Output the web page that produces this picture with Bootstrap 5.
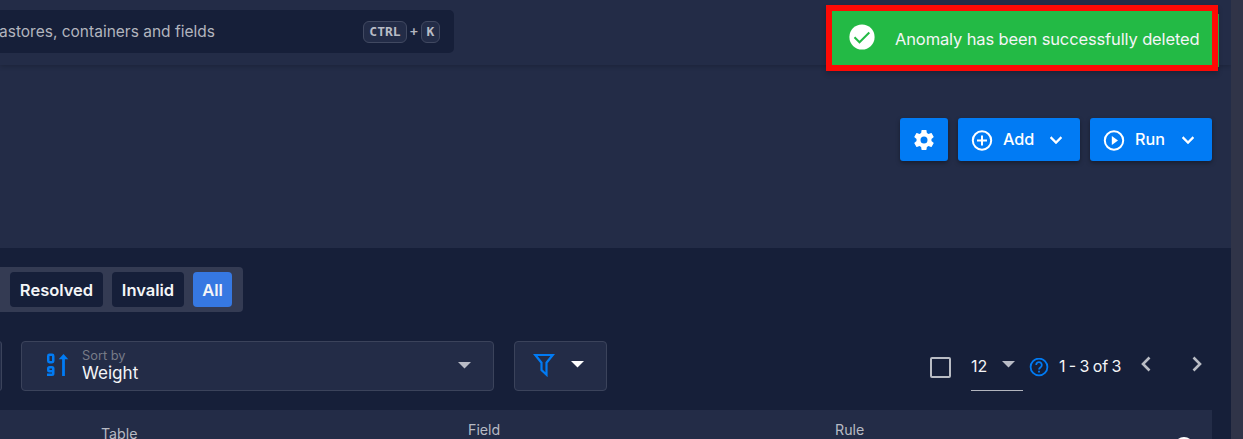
<!DOCTYPE html>
<html lang="en"><head><meta charset="utf-8"><title>Anomalies</title>
<link href="https://cdn.jsdelivr.net/npm/bootstrap@5.3.0/dist/css/bootstrap.min.css" rel="stylesheet">
<style>
html{background:#303448}
body{width:1243px;height:439px;overflow:hidden;background:#303448;font-family:Inter,sans-serif;color:#f4f5f7;font-size:16px;line-height:20px}
.page{width:1231px;height:439px;background:#161f39;overflow:hidden;white-space:nowrap}
.surface{background:#232c47}
.topbar{height:65px;padding-top:10px;box-shadow:0 1px 5px rgba(0,0,0,.22);z-index:1}
.search{width:454px;height:43px;background:#161f39;border-radius:0 5px 5px 0;padding-right:14px;color:#b2b5be;font-size:15.5px}
.hint{margin-left:-1px}
.key{font:bold 13px/19px "DejaVu Sans Mono",monospace;color:#b9bcc6;background:#232c47;border:1px solid #414961;border-radius:6px;width:19px;height:22px;text-align:center;padding:0}
.key.wide{width:44px}
.joiner{width:14px;text-align:center;font:bold 13px/20px "DejaVu Sans Mono",monospace}
.notice{left:826px;top:5px;z-index:2;width:392px;height:66px;border:6px solid #fd0a05;background:#23ba45;box-shadow:0 3px 5px rgba(0,0,0,.2);font-size:16.5px;letter-spacing:-.13px;padding-left:17px}
.notice::after{content:"";position:absolute;left:386px;top:3px;width:1px;height:53px;background:#23a844}
.notice span{margin:1px 0 0 20px}
.notice svg{margin-top:-2px}
.hero{height:183px;padding:53px 19px 0 0;gap:10px}
.act{--bs-btn-color:#fff;--bs-btn-bg:#017bf4;--bs-btn-border-width:0px;--bs-btn-hover-bg:#026fdd;--bs-btn-hover-color:#fff;height:43px;border-radius:3px;padding:0 12px;font-size:16.2px;font-weight:500;width:122px;box-shadow:0 2px 4px rgba(0,0,0,.35)}
.act.square{width:48px}
.act span{margin-left:9px}
.states{width:243px;height:45px;margin-top:19px;background:#343b53;border-radius:0 4px 4px 0;padding-left:10px;gap:9px}
.state{width:93px;height:35px;border-radius:4px;background:#161f39;font-weight:600;font-size:16.5px}
.state.mid{width:72px}
.state.on{width:39px;background:#3678e2}
.tools{height:50px;margin-top:29px;padding-right:19px}
.field{height:50px;border:1px solid #3b435b;border-radius:4px;background:#232c47}
.prev{width:6px;margin-left:-4px}
.sorter{width:473px;margin-left:19px;padding:0 22px 2px 24px}
.sorter small{display:block;font-size:12.8px;line-height:15px;color:#777b87}
.sorter strong{display:block;font-weight:400;font-size:17.1px;line-height:20px}
.filter{width:93px;margin-left:20px;padding:0 22px 3px 18px}
.tick{width:21px;height:21px;border:2px solid #b9bcc4;border-radius:2px;margin:2px 20px 0 323px}
.count{width:52px;height:49px;border-bottom:1px solid #b2b5be;padding:1px 8px 0 0}
.range{margin-left:10px;width:64px;word-spacing:-1.2px}
.thead-row{height:29px;margin-top:19px;width:1212px;color:#b7bac3;font-size:14.2px;padding-left:101px}
.thead-row>span{width:367px;padding-top:10px}
.thead-row>.low{padding-top:14px;height:29px}
svg{display:block;flex:none}
</style></head><body>
<div class="page position-relative d-flex flex-column">
<header class="topbar surface position-relative flex-shrink-0">
<div class="search d-flex align-items-center"><span class="hint">astores, containers and fields</span><kbd class="key wide ms-auto">CTRL</kbd><span class="joiner">+</span><kbd class="key">K</kbd></div>
</header>
<div class="notice position-absolute d-flex align-items-center" role="alert">
<svg width="26" height="26" viewBox="0 0 26 26"><circle cx="13" cy="13" r="12.600" fill="#fff"/><path d="M5.500 13.300l5 5 9.800-9.800" fill="none" stroke="#23ba45" stroke-width="2"/></svg>
<span>Anomaly has been successfully deleted</span></div>
<section class="hero surface d-flex justify-content-end align-items-start flex-shrink-0">
<button class="btn act square d-flex align-items-center"><svg width="24" height="24" viewBox="0 0 24 24" fill="#fff"><path d="M12,15.5A3.5,3.5 0 0,1 8.5,12A3.5,3.5 0 0,1 12,8.5A3.5,3.5 0 0,1 15.5,12A3.5,3.5 0 0,1 12,15.5M19.43,12.97C19.47,12.65 19.5,12.33 19.5,12C19.5,11.67 19.47,11.34 19.43,11L21.54,9.37C21.73,9.22 21.78,8.95 21.66,8.73L19.66,5.27C19.54,5.05 19.27,4.96 19.05,5.05L16.56,6.05C16.04,5.66 15.5,5.32 14.87,5.07L14.5,2.42C14.46,2.18 14.25,2 14,2H10C9.75,2 9.54,2.18 9.5,2.42L9.13,5.07C8.5,5.32 7.96,5.66 7.44,6.05L4.95,5.05C4.73,4.96 4.46,5.05 4.34,5.27L2.34,8.73C2.21,8.95 2.27,9.22 2.46,9.37L4.57,11C4.53,11.34 4.5,11.67 4.5,12C4.5,12.33 4.53,12.65 4.57,12.97L2.46,14.63C2.27,14.78 2.21,15.05 2.34,15.27L4.34,18.73C4.46,18.95 4.73,19.03 4.95,18.95L7.44,17.94C7.96,18.34 8.5,18.68 9.13,18.93L9.5,21.58C9.54,21.82 9.75,22 10,22H14C14.25,22 14.46,21.82 14.5,21.58L14.87,18.93C15.5,18.67 16.04,18.34 16.56,17.94L19.05,18.95C19.27,19.03 19.54,18.95 19.66,18.73L21.66,15.27C21.78,15.05 21.73,14.78 21.54,14.63L19.43,12.97Z"/></svg></button>
<button class="btn act d-flex align-items-center"><svg width="24" height="24" viewBox="0 0 24 24" fill="none" stroke="#fff" stroke-width="2"><circle cx="12" cy="12.500" r="9.200"/><path d="M12 7.500v10M7 12.500h10"/></svg><span>Add</span><svg class="ms-auto" width="24" height="24" viewBox="0 0 24 24" fill="#fff" stroke="#fff" stroke-width=".4"><path d="M7.410 8.580 12 13.170l4.590-4.590L18 10l-6 6-6-6z"/></svg></button>
<button class="btn act d-flex align-items-center"><svg width="24" height="24" viewBox="0 0 24 24" fill="none" stroke="#fff" stroke-width="2"><circle cx="12" cy="12.500" r="9.200"/><path d="M9.800 8v9l6.200-4.500z" fill="#fff" stroke="none"/></svg><span>Run</span><svg class="ms-auto" width="24" height="24" viewBox="0 0 24 24" fill="#fff" stroke="#fff" stroke-width=".4"><path d="M7.410 8.580 12 13.170l4.590-4.590L18 10l-6 6-6-6z"/></svg></button>
</section>
<div class="states d-flex align-items-center flex-shrink-0">
<span class="state d-flex align-items-center justify-content-center">Resolved</span><span class="state mid d-flex align-items-center justify-content-center">Invalid</span><span class="state on d-flex align-items-center justify-content-center">All</span></div>
<div class="tools d-flex align-items-center flex-shrink-0">
<div class="field prev"></div>
<div class="field sorter d-flex align-items-center">
<svg width="24" height="24" viewBox="0 0 24 24" fill="none" stroke="#017bf4" stroke-width="2.500"><rect x="2.250" y="1.750" width="5" height="7.500" rx="1.200"/><path d="M1 21.750h5q1.250 0 1.250-1.250v-5q0-1.250-1.250-1.250H3.500q-1.250 0-1.250 1.250v1.500q0 1.250 1.250 1.250H7"/><path d="M17.500 23V5" stroke-width="2.800"/><path d="M12.700 6.200 17.500 1l4.800 5.200z" fill="#017bf4" stroke="none"/></svg>
<div class="ms-2 ps-1"><small>Sort by</small><strong>Weight</strong></div>
<svg class="ms-auto" width="13" height="7" viewBox="0 0 13 7" fill="#b9bcc6"><path d="M0 0h13L6.500 6.500z"/></svg></div>
<div class="field filter d-flex align-items-center justify-content-between"><svg width="22" height="24" viewBox="0 0 22 24" fill="none" stroke="#017bf4" stroke-width="2.200"><path d="M2.300 2h17.400L13.500 9.700v12L8.500 17V9.700z"/></svg><svg width="13" height="7" viewBox="0 0 13 7" fill="#fff"><path d="M0 0h13L6.500 6.500z"/></svg></div>
<span class="tick"></span>
<div class="count d-flex align-items-center justify-content-between"><span>12</span><svg class="mb-1" width="13" height="7" viewBox="0 0 13 7" fill="#b9bcc6"><path d="M0 0h13L6.500 6.500z"/></svg></div>
<svg class="mt-1" style="margin-left:6px" width="20" height="20" viewBox="0 0 20 20" fill="none" stroke="#017bf4" stroke-width="1.800"><circle cx="10" cy="9" r="8.400"/><path d="M7.200 7a2.800 2.800 0 1 1 4.600 2.100C10.600 10 10 10.400 10 11.500M10 12.700v1.900"/></svg>
<span class="range">1 - 3 of 3</span>
<svg class="ms-auto mb-1" width="12" height="16" viewBox="0 0 12 16" fill="none" stroke="#b9bcc4" stroke-width="2.600"><path d="M9.500 1.500 3 8l6.500 6.500"/></svg>
<svg class="mb-1" style="margin-left:39px;margin-right:9px" width="12" height="16" viewBox="0 0 12 16" fill="none" stroke="#b9bcc4" stroke-width="2.600"><path d="M2.500 1.500 9 8l-6.500 6.500"/></svg>
</div>
<div class="thead-row surface d-flex flex-shrink-0"><span class="low">Table</span><span>Field</span><span>Rule</span><svg style="margin:27px 0 0 -28px" width="20" height="20" viewBox="0 0 20 20"><circle cx="10" cy="10" r="10" fill="#fff"/></svg></div>
</div>
<script src="https://cdn.jsdelivr.net/npm/bootstrap@5.3.0/dist/js/bootstrap.bundle.min.js"></script>
</body></html>
